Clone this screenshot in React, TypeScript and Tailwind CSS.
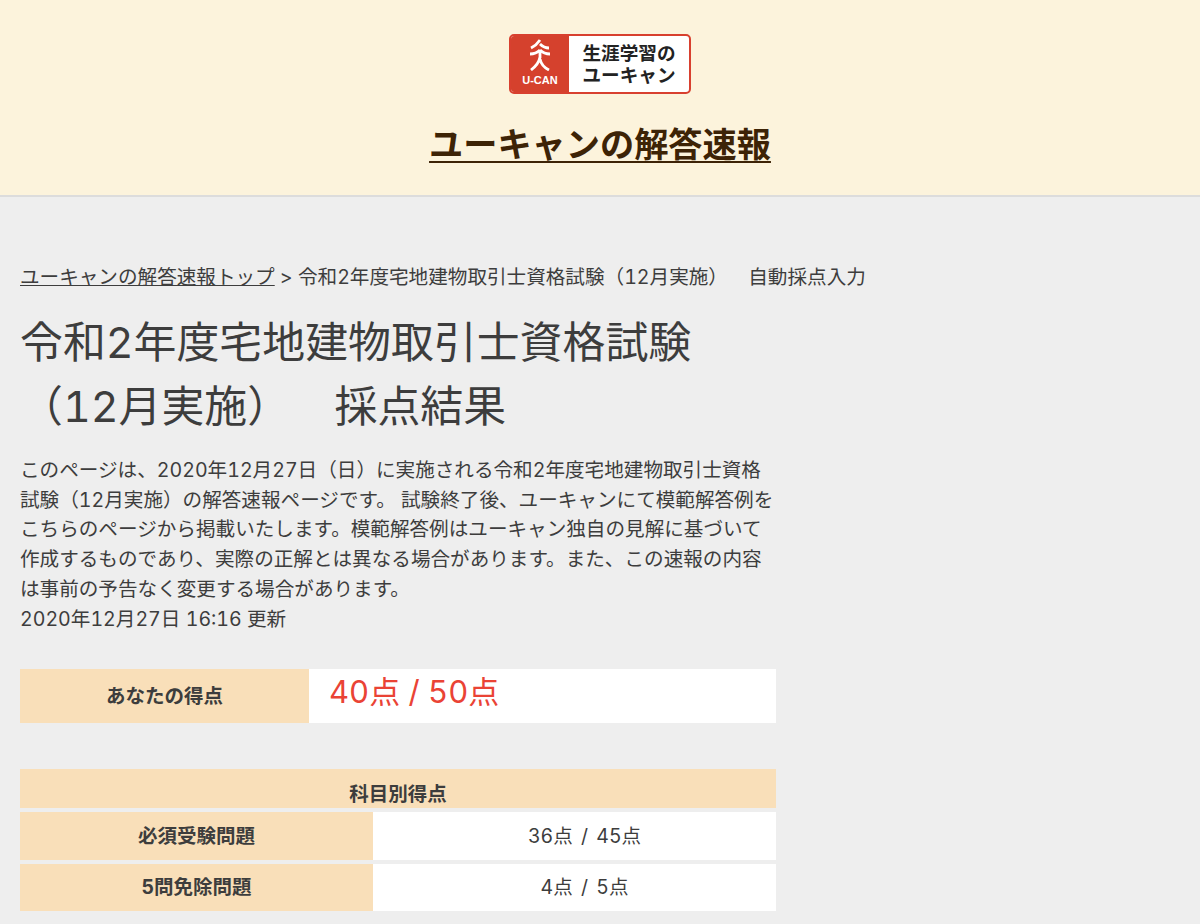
const base = "font-['Inter','Noto_Sans_CJK_JP','Noto_Sans_CJK_SC',sans-serif] tabular-nums"

const Logo = () => (
  <div className="flex h-[60px] w-[182px] overflow-hidden rounded-[5px] border-2 border-[#d8402f] bg-white">
    <div className="flex w-[58px] flex-col items-center bg-[#d5412d] pt-[3px]">
      <svg width="24" height="32" viewBox="0 0 24 32" fill="none" stroke="#fff" strokeWidth="2.8">
        <path d="M12 1 C10 4 7 7 3 9 M12 5 C14 7 17 9 21 9" />
        <path d="M2 15 C6 15 10 13 12 11 M22 15 C18 15 14 13 12 11" />
        <path d="M12 11 L12 19 M12 18 C11 24 7 28 3 31 M12 20 C13 25 17 29 21 31" />
      </svg>
      <span className="mt-[3px] font-['Liberation_Sans',sans-serif] text-[11px] leading-[12px] font-bold text-white">U-CAN</span>
    </div>
    <div className="flex flex-1 flex-col items-center justify-center text-[18.6px] leading-[22px] font-bold text-[#222]">
      <span>生涯学習の</span>
      <span>ユーキャン</span>
    </div>
  </div>
)

const Row = ({ label, value, tall }: { label: string; value: string; tall?: boolean }) => (
  <div className={tall ? "flex h-12 w-[756px]" : "flex h-[47px] w-[756px]"}>
    <div className="flex w-[353px] items-center justify-center bg-[#f9dfb9] text-[19.5px] font-bold text-[#3d3d3d]">{label}</div>
    <div className="flex flex-1 items-center justify-center bg-white pl-5 text-[19.5px] text-[#3d3d3d] [word-spacing:3px]">{value}</div>
  </div>
)

export default function App() {
  return (
    <div className={`${base} h-[924px] overflow-hidden bg-[#eeeeee] text-[#3d3d3d]`}>
      <header className="flex h-[197px] flex-col items-center border-b-2 border-[#dcdcdc] bg-[#fcf3dc] pt-[34px]">
        <Logo />
        <h1 className="mt-[28px] text-[34.2px] leading-[46px] font-bold text-[#3d2306] underline decoration-2 underline-offset-[4px]">ユーキャンの解答速報</h1>
      </header>
      <main className="px-5 pt-[66px]">
        <p className="text-[19.6px] leading-[28px] whitespace-nowrap">
          <span className="underline">ユーキャンの解答速報トップ</span> &gt; 令和2年度宅地建物取引士資格試験（12月実施）　&nbsp;&nbsp;自動採点入力
        </p>
        <h2 className="mt-[19px] w-[756px] text-[42.9px] leading-[64px] font-normal">
          令和2年度宅地建物取引士資格試験<br />（12月実施）　&nbsp;&nbsp;採点結果
        </h2>
        <p className="mt-[18px] w-[756px] text-[19.6px] leading-[29.7px]">
          このページは、2020年12月27日（日）に実施される令和2年度宅地建物取引士資格試験（12月実施）の解答速報ページです。 試験終了後、ユーキャンにて模範解答例をこちらのページから掲載いたします。模範解答例はユーキャン独自の見解に基づいて作成するものであり、実際の正解とは異なる場合があります。また、この速報の内容は事前の予告なく変更する場合があります。<br />2020年12月27日 16:16 更新
        </p>
        <div className="mt-[35px] flex h-[54px] w-[756px]">
          <div className="flex w-[289px] items-center justify-center bg-[#f9dfb9] text-[19.5px] font-bold">あなたの得点</div>
          <div className="flex-1 bg-white pl-5 text-[31px] leading-[46px] text-[#ea4335]">40点 / 50点</div>
        </div>
        <div className="mt-[46px] flex w-[756px] flex-col gap-1">
          <div className="flex h-[39px] items-end justify-center bg-[#f9dfb9] text-[19.5px] leading-[28px] font-bold">科目別得点</div>
          <Row label="必須受験問題" value="36点 / 45点" tall />
          <Row label="5問免除問題" value="4点 / 5点" />
        </div>
      </main>
    </div>
  )
}
